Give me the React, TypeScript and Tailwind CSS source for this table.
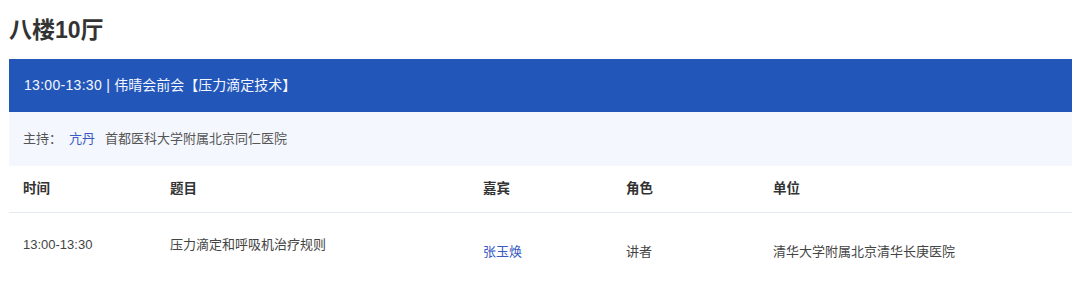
import React from 'react';

const cols = ['w-[147px]', 'w-[313px]', 'w-[143px]', 'w-[147px]', 'flex-1'];

const App: React.FC = () => {
  const font = { fontFamily: '"Liberation Sans", "Noto Sans CJK SC", sans-serif' };
  return (
    <div className="bg-white w-[1080px] h-[287px] overflow-hidden" style={font}>
      <div className="pl-[9px] pr-[8px]">
        <h1 className="h-[59px] pt-[14px] text-[23px] leading-[32px] font-bold text-[#333]">八楼10厅</h1>

        <div className="h-[53px] bg-[#2356b9] flex items-center px-[15px] text-[14px] text-[#f4f7ff]">
          <span className="tracking-[0.3px] whitespace-pre">13:00-13:30 | </span>
          <span>伟晴会前会【压力滴定技术】</span>
        </div>

        <div className="h-[54px] bg-[#f4f7fe] flex items-center px-[14px] text-[13px] text-[#555]">
          <span>主持：</span>
          <span className="ml-[7px] text-[#3659c2]">亢丹</span>
          <span className="ml-[10px]">首都医科大学附属北京同仁医院</span>
        </div>

        <div className="flex h-[47px] items-center border-b border-[#e4e9f1] text-[13.5px] font-bold text-[#333]">
          {['时间', '题目', '嘉宾', '角色', '单位'].map((h, i) => (
            <div key={h} className={`${cols[i]} px-[14px]`}>{h}</div>
          ))}
        </div>

        <div className="flex h-[74px] text-[13px] text-[#444]">
          <div className={`${cols[0]} px-[14px] pt-[22px]`}>13:00-13:30</div>
          <div className={`${cols[1]} px-[14px] pt-[22px]`}>压力滴定和呼吸机治疗规则</div>
          <div className={`${cols[2]} px-[14px] pt-[29px] text-[#3659c2]`}>张玉焕</div>
          <div className={`${cols[3]} px-[14px] pt-[29px]`}>讲者</div>
          <div className={`${cols[4]} px-[14px] pt-[29px]`}>清华大学附属北京清华长庚医院</div>
        </div>
      </div>
    </div>
  );
};

export default App;
